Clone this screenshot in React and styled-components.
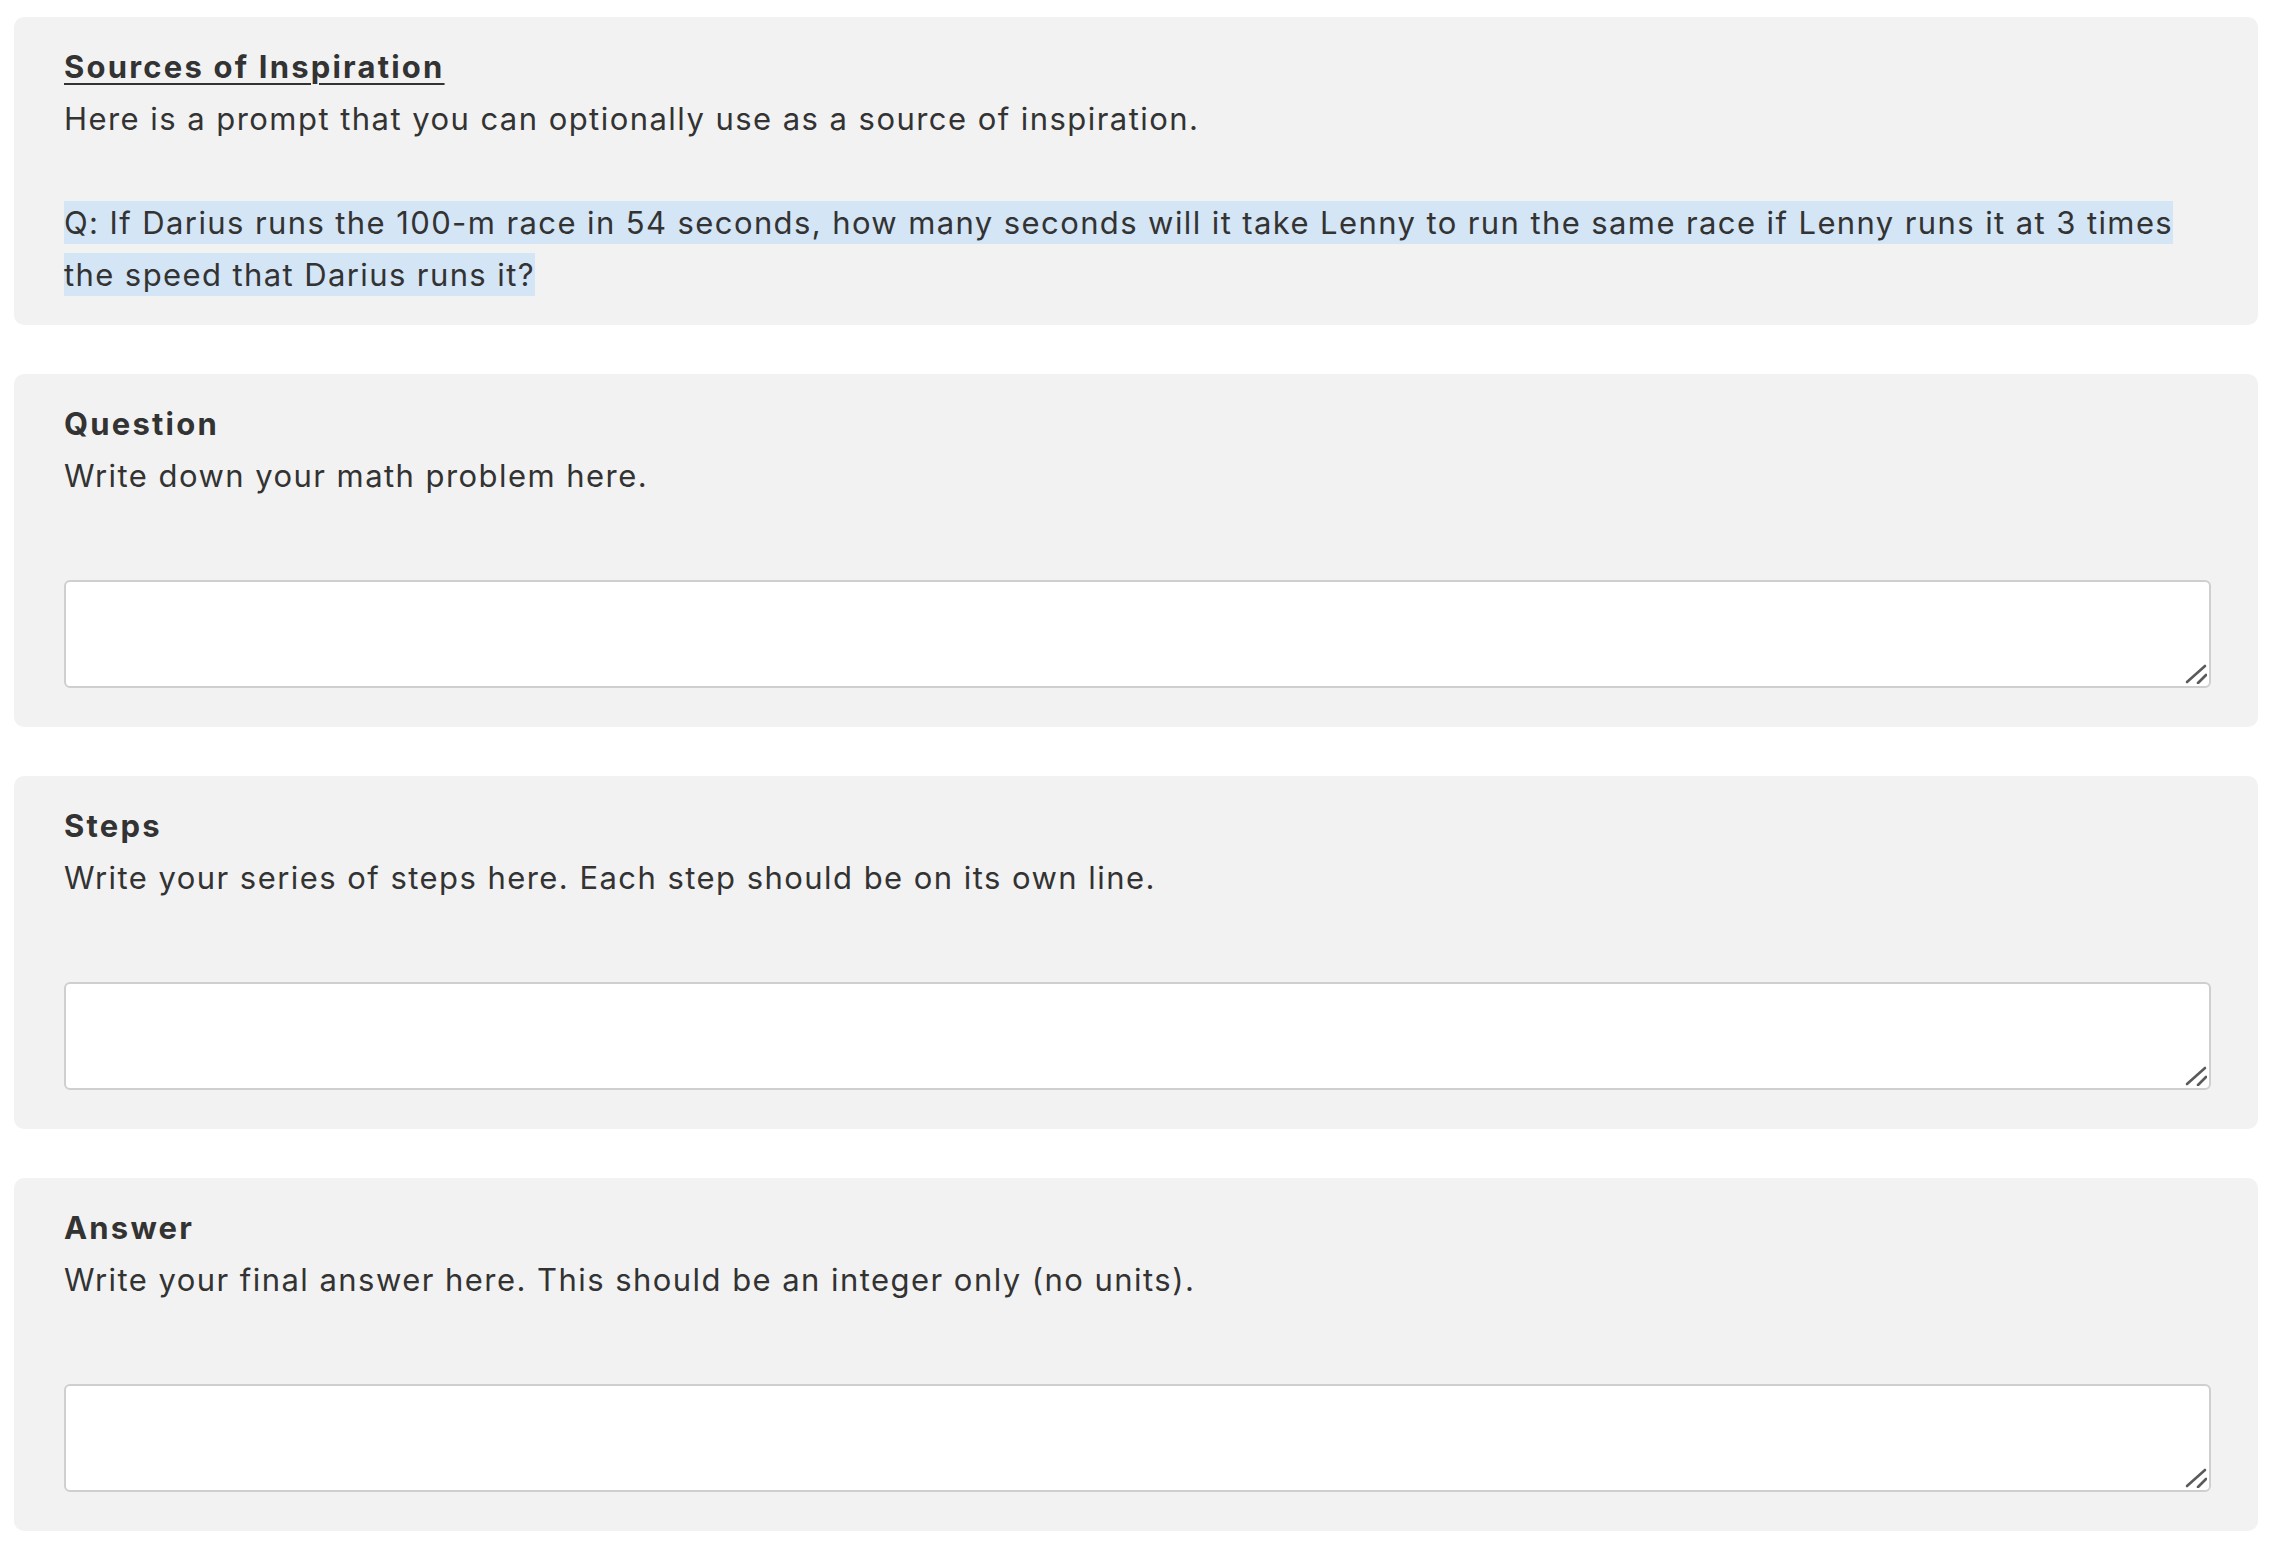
import React from 'react';
import styled, { createGlobalStyle } from 'styled-components';

const GlobalStyle = createGlobalStyle`
    html, body {
        margin: 0;
        padding: 0;
        background: #ffffff;
    }
    body {
        font-family: "Inter", "Liberation Sans", sans-serif;
        color: #333333;
    }
`;

const sections = [
    { title: 'Question', desc: 'Write down your math problem here.' },
    { title: 'Steps', desc: 'Write your series of steps here. Each step should be on its own line.' },
    { title: 'Answer', desc: 'Write your final answer here. This should be an integer only (no units).' },
];

const App = () => {
    return (
        <React.Fragment>
            <GlobalStyle />
            <Page>
                <Card pb="24px">
                    <Title underline>Sources of Inspiration</Title>
                    <Desc>Here is a prompt that you can optionally use as a source of inspiration.</Desc>
                    <Prompt>
                        <Marked>
                            Q: If Darius runs the 100-m race in 54 seconds, how many seconds will it take Lenny to run the same race if Lenny runs it at 3 times the speed that Darius runs it?
                        </Marked>
                    </Prompt>
                </Card>
                {sections.map((s) => (
                    <Card key={s.title} pb="39px">
                        <Title>{s.title}</Title>
                        <Desc>{s.desc}</Desc>
                        <FieldWrap>
                            <Field />
                            <Grip width="22" height="20" viewBox="0 0 22 20">
                                <line x1="2" y1="18" x2="20" y2="2" />
                                <line x1="13" y1="19" x2="21" y2="11" />
                            </Grip>
                        </FieldWrap>
                    </Card>
                ))}
            </Page>
        </React.Fragment>
    );
};

const Page = styled.div`
    display: flex;
    flex-direction: column;
    gap: 49px;
    padding: 17px 18px 12px 14px;
`;

const Card = styled.section`
    background: #f2f2f2;
    border-radius: 10px;
    padding: 24px 47px ${(p) => p.pb} 50px;
`;

const Title = styled.div`
    font-size: 31px;
    line-height: 52px;
    font-weight: 700;
    letter-spacing: 2.2px;
    color: #333333;
    text-decoration: ${(p) => (p.underline ? 'underline' : 'none')};
    text-decoration-thickness: 2px;
    text-underline-offset: 5px;
`;

const Desc = styled.div`
    font-size: 31px;
    line-height: 52px;
    letter-spacing: 1.45px;
    color: #333333;
`;

const Prompt = styled.p`
    margin: 52px 0 0 0;
    font-size: 31px;
    line-height: 52px;
    letter-spacing: 1.4px;
    color: #333333;
`;

const Marked = styled.span`
    background: #d4e5f5;
    padding: 3px 0;
    -webkit-box-decoration-break: clone;
    box-decoration-break: clone;
`;

const FieldWrap = styled.div`
    position: relative;
    margin-top: 78px;
    height: 108px;
`;

const Field = styled.textarea`
    display: block;
    box-sizing: border-box;
    width: 100%;
    height: 108px;
    background: #ffffff;
    border: 2px solid #cfcfcf;
    border-radius: 6px;
    resize: none;
    outline: none;
    font-family: inherit;
    font-size: 31px;
`;

const Grip = styled.svg`
    position: absolute;
    right: 4px;
    bottom: 4px;
    stroke: #5a5a5a;
    stroke-width: 2.6;
    stroke-linecap: round;
    pointer-events: none;
`;

export default App;
